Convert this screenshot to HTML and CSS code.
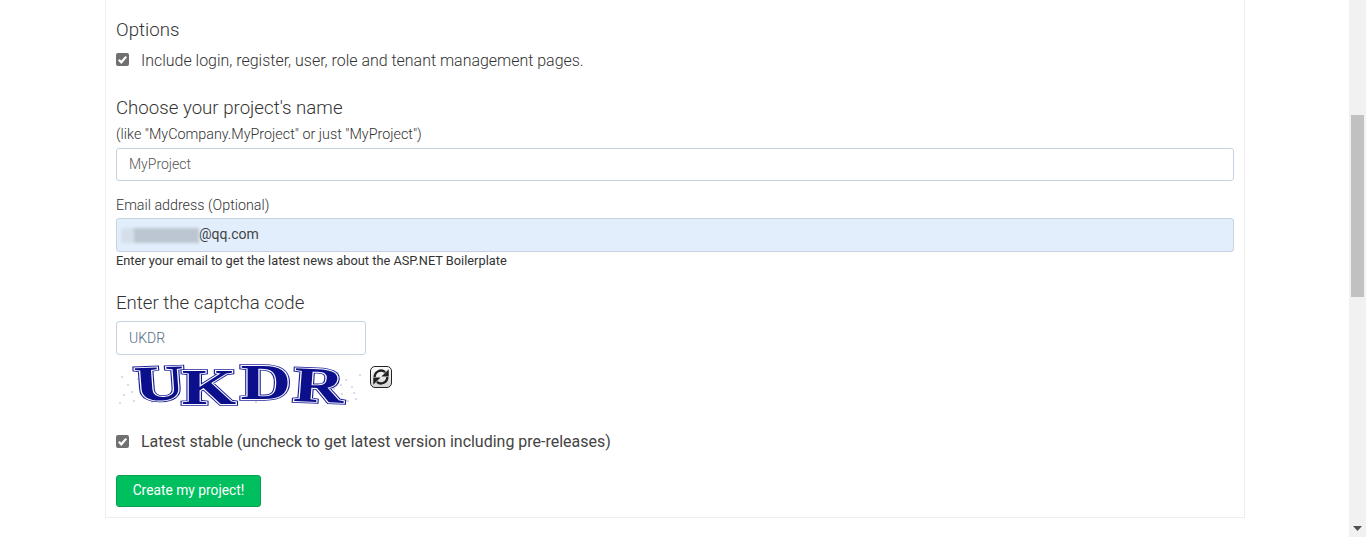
FILE: index.html
```html
<!DOCTYPE html>
<html lang="en">
<head>
<meta charset="utf-8">
<title>Create project</title>
<link rel="stylesheet" href="styles.css">
</head>
<body>
<div class="page">
  <main class="panel">
    <h4 class="heading heading-options">Options</h4>
    <label class="check check-first">
      <span class="box"><svg viewBox="0 0 13 13" width="13" height="13"><path d="M2.800 6.800 5.300 9.300 10.200 3.600" fill="none" stroke="#fff" stroke-width="2.200"/></svg></span>
      <span class="check-label">Include login, register, user, role and tenant management pages.</span>
    </label>
    <h4 class="heading heading-name">Choose your project's name</h4>
    <p class="hint">(like "MyCompany.MyProject" or just "MyProject")</p>
    <input class="field field-name" type="text" value="MyProject">
    <p class="label-email">Email address (Optional)</p>
    <div class="field field-email">
      <span class="blur-mask"><i></i><i></i><i></i><i></i></span><span>@qq.com</span>
    </div>
    <p class="help">Enter your email to get the latest news about the ASP.NET Boilerplate</p>
    <h4 class="heading heading-captcha">Enter the captcha code</h4>
    <input class="field field-captcha" type="text" value="UKDR">
    <div class="captcha-row">
      <svg class="captcha" viewBox="0 0 250 40" width="250" height="40">
        <g fill="#a9aed6">
          <circle cx="6" cy="12" r=".8"/><circle cx="12" cy="20" r=".8"/><circle cx="8" cy="30" r=".8"/><circle cx="18" cy="36" r=".8"/><circle cx="22" cy="14" r=".8"/><circle cx="30" cy="6" r=".8"/><circle cx="16" cy="27" r=".8"/><circle cx="4" cy="38" r=".8"/><circle cx="36" cy="37" r=".8"/><circle cx="50" cy="34" r=".8"/><circle cx="58" cy="18" r=".8"/><circle cx="120" cy="36" r=".8"/><circle cx="140" cy="37" r=".8"/><circle cx="165" cy="5" r=".8"/><circle cx="185" cy="4" r=".8"/><circle cx="205" cy="6" r=".8"/><circle cx="214" cy="12" r=".8"/><circle cx="222" cy="8" r=".8"/><circle cx="230" cy="15" r=".8"/><circle cx="218" cy="24" r=".8"/><circle cx="226" cy="29" r=".8"/><circle cx="236" cy="22" r=".8"/><circle cx="240" cy="34" r=".8"/><circle cx="232" cy="36" r=".8"/><circle cx="212" cy="33" r=".8"/><circle cx="204" cy="19" r=".8"/><circle cx="244" cy="10" r=".8"/><circle cx="100" cy="8" r=".8"/><circle cx="78" cy="36" r=".8"/><circle cx="225" cy="20" r=".8"/><circle cx="210" cy="37" r=".8"/><circle cx="238" cy="28" r=".8"/>
        </g>
        <defs>
          <text id="captcha-word" x="14 47 89 126" y="36 39 34 36" rotate="-3 0 0 3" transform="scale(1.4 1)">UKDR</text>
        </defs>
        <use href="#captcha-word" class="cap-outer"/>
        <use href="#captcha-word" class="cap-gap"/>
        <use href="#captcha-word" class="cap-core"/>
      </svg>
      <button class="refresh" type="button" aria-label="Refresh">
        <svg viewBox="0 0 22 22" width="20" height="20">
          <g fill="#222">
            <path d="M4 11A7 7 0 0 1 15.500 5.600" fill="none" stroke="#222" stroke-width="2.600"/>
            <path d="M19.500 2.500V10.500H11.500z"/>
          </g>
          <g fill="#222" transform="rotate(180 11 11)">
            <path d="M4 11A7 7 0 0 1 15.500 5.600" fill="none" stroke="#222" stroke-width="2.600"/>
            <path d="M19.500 2.500V10.500H11.500z"/>
          </g>
        </svg>
      </button>
    </div>
    <label class="check check-stable">
      <span class="box"><svg viewBox="0 0 13 13" width="13" height="13"><path d="M2.800 6.800 5.300 9.300 10.200 3.600" fill="none" stroke="#fff" stroke-width="2.200"/></svg></span>
      <span>Latest stable (uncheck to get latest version including pre-releases)</span>
    </label>
    <button class="submit" type="button">Create my project!</button>
  </main>
</div>
<aside class="scrollbar">
  <div class="track"><div class="thumb"></div></div>
  <svg class="arrow" viewBox="0 0 9 5" width="9" height="5"><path d="M0 0h9L4.500 5z" fill="#505050"/></svg>
</aside>
</body>
</html>
```
FILE: styles.css
```css
* { box-sizing: border-box; }
html, body { margin: 0; height: 537px; overflow: hidden; }
body {
  display: flex;
  font-family: Roboto, "Liberation Sans", sans-serif;
  font-weight: 300;
  color: #333;
  background: #fff;
}
.page { width: 1349px; padding-left: 105px; }
.panel {
  width: 1140px;
  height: 518px;
  border: 1px solid #eee;
  border-top: 0;
  padding: 0 10px;
  display: flex;
  flex-direction: column;
  align-items: flex-start;
}
.heading { margin: 0; font-size: 18.66px; font-weight: 300; line-height: 22px; color: #333; }
.heading-options { margin-top: 19px; }
.heading-name { margin-top: 27px; }
.heading-captcha { margin-top: 22px; }
.check { display: flex; align-items: center; font-size: 15.96px; line-height: 22px; }
.check-label { padding-top: 2px; }
.check-first { height: 20px; margin-top: 9px; }
.check-stable { margin-top: 26px; height: 22px; font-size: 15.97px; font-weight: 400; color: #444; }
.box {
  width: 13px; height: 13px; margin: -2px 12px 0 0;
  background: #707070; border-radius: 2px;
  display: flex;
}
.hint { margin: 6px 0 0; font-size: 14.35px; line-height: 20px; }
.field {
  display: flex;
  align-items: center;
  width: 1118px;
  height: 34px;
  padding: 0 12px;
  border: 1px solid #c5d3e2;
  border-radius: 3px;
  font: 300 14px Roboto, sans-serif;
  color: #555;
  background: #fff;
  margin: 4px 0 0;
}
.field-name { height: 33px; margin-top: 3px; padding-bottom: 2px; }
.label-email { margin: 14px 0 0; font-size: 14.3px; line-height: 20px; }
.label-email + .field { margin-top: 3px; }
.field-email { background: #e2eefc; padding: 0 4px 2px; color: #444; font-weight: 400; }
.blur-mask { display: flex; width: 78px; height: 15px; margin-top: 2px; filter: blur(1.5px); }
.blur-mask i { flex: 1; background: #bcc6d2; }
.blur-mask i:first-child { background: #d6dfe9; flex: .6; }
.help { margin: 0; font-size: 12.8px; line-height: 18px; font-weight: 400; color: #333; }
.field-captcha { width: 250px; margin-top: 7px; color: #4f6a85; }
.captcha-row { display: flex; align-items: flex-start; margin-top: 10px; height: 40px; }
.captcha { display: block; overflow: visible; }
.captcha text {
  font-family: "Liberation Serif", serif;
  font-weight: 700;
  font-size: 50px;
}
.cap-outer { fill: #0b0f8c; stroke: #1a1f96; stroke-width: 3.500px; }
.cap-gap { fill: #fff; stroke: #fff; stroke-width: 1.800px; }
.cap-core { fill: #0b0f8c; stroke: none; }
.refresh {
  width: 22px; height: 22px; margin: 1px 0 0 4px; padding: 0;
  border: 1px solid #222; border-radius: 5px;
  background: linear-gradient(#fdfdfd, #d4d4d4);
  display: flex; align-items: center; justify-content: center;
}
.submit {
  margin-top: 22px;
  width: 145px; height: 32px;
  padding: 0 0 2px;
  border: 1px solid #0aa052;
  border-radius: 3px;
  background: #00bf5f;
  color: #fff;
  font: 400 13.8px Roboto, sans-serif;
}
.scrollbar { width: 17px; height: 537px; background: #f1f1f1; display: flex; flex-direction: column; align-items: center; }
.track { flex: 1; width: 100%; padding: 115px 2px 0; }
.thumb { height: 182px; background: #c1c1c1; }
.arrow { margin-bottom: 6px; }
```
